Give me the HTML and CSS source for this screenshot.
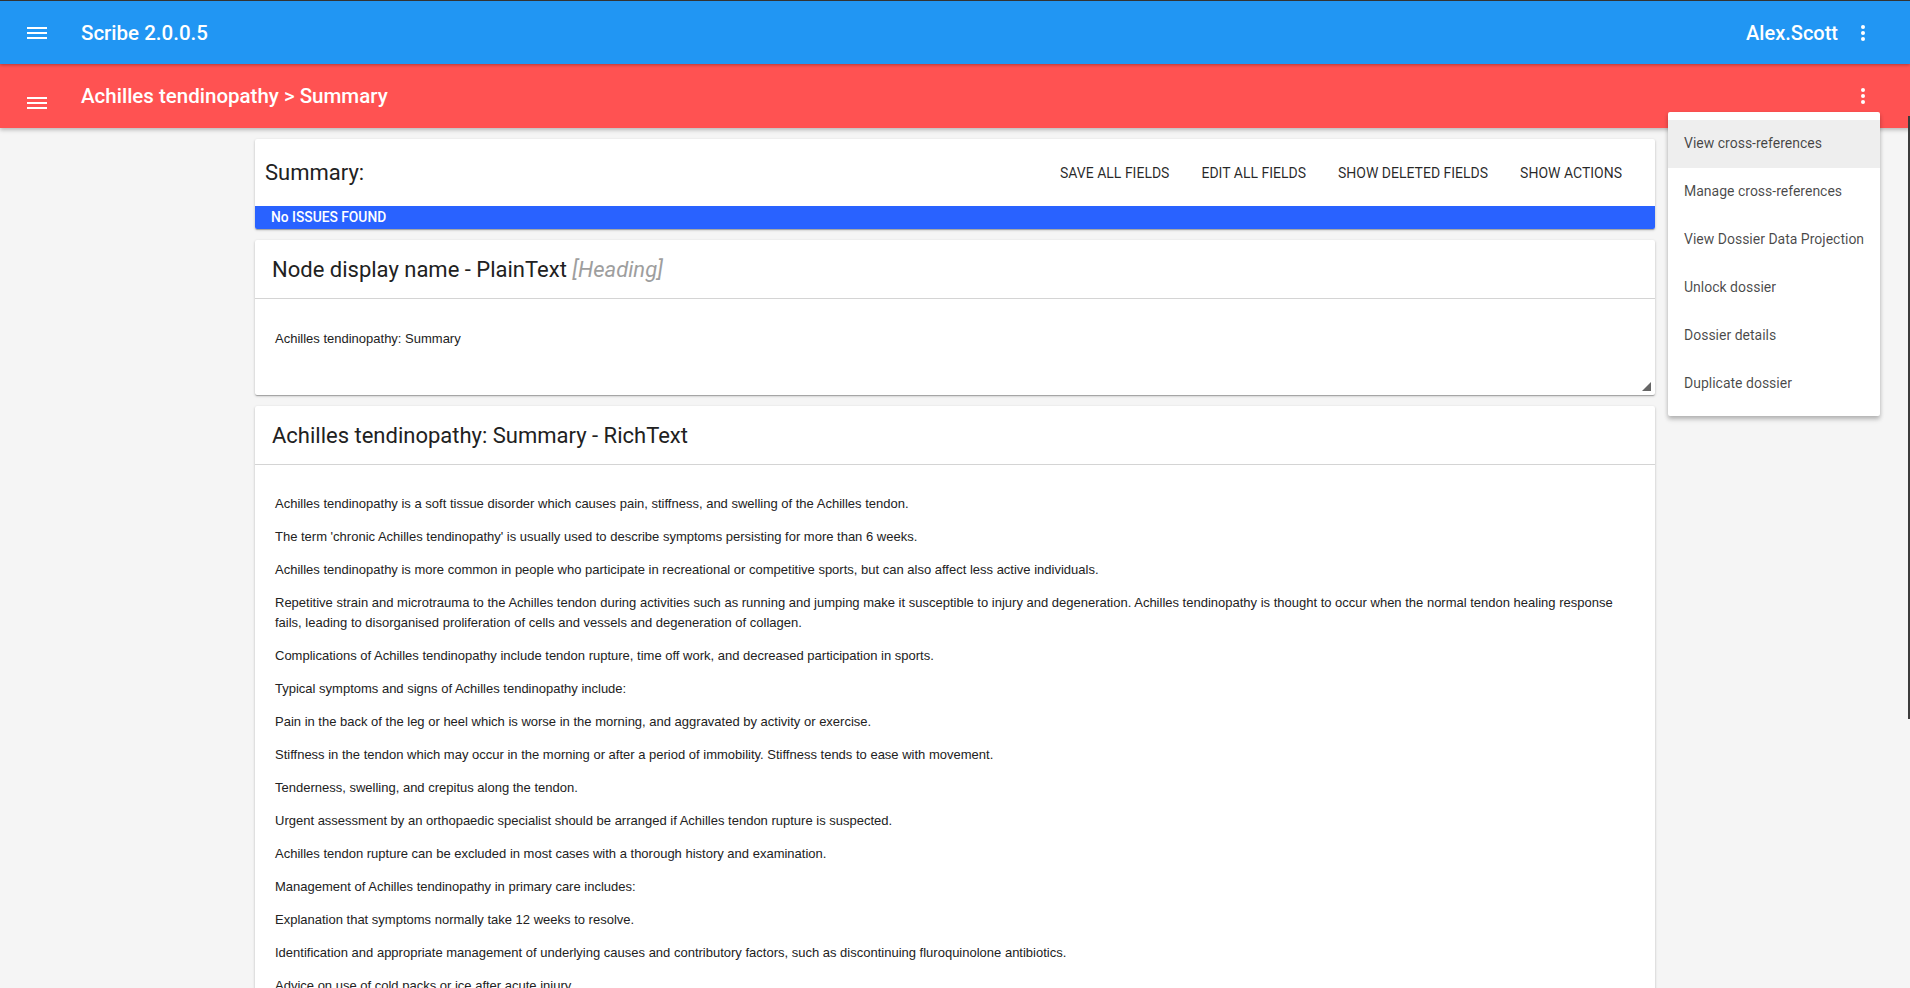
FILE: index.html
```html
<!DOCTYPE html>
<html lang="en">
<head>
<meta charset="utf-8">
<title>Scribe 2.0.0.5</title>
<link rel="stylesheet" href="styles.css">
</head>
<body>
<header class="appbar">
  <button class="icon-btn menu-btn" aria-label="Menu">
    <svg width="20" height="12" viewBox="0 0 20 12"><rect x="0" y="0" width="20" height="2" fill="#fff"/><rect x="0" y="5" width="20" height="2" fill="#fff"/><rect x="0" y="10" width="20" height="2" fill="#fff"/></svg>
  </button>
  <div class="app-title">Scribe 2.0.0.5</div>
  <div class="user">Alex.Scott</div>
  <button class="icon-btn kebab" aria-label="More">
    <svg width="24" height="24" viewBox="0 0 24 24"><circle cx="12" cy="6" r="2" fill="#fff"/><circle cx="12" cy="12" r="2" fill="#fff"/><circle cx="12" cy="18" r="2" fill="#fff"/></svg>
  </button>
</header>
<nav class="subbar">
  <button class="icon-btn menu-btn sub-menu-btn" aria-label="Menu">
    <svg width="20" height="12" viewBox="0 0 20 12"><rect x="0" y="0" width="20" height="2" fill="#fff"/><rect x="0" y="5" width="20" height="2" fill="#fff"/><rect x="0" y="10" width="20" height="2" fill="#fff"/></svg>
  </button>
  <div class="app-title">Achilles tendinopathy &gt; Summary</div>
  <div class="spacer"></div>
  <button class="icon-btn kebab" aria-label="More">
    <svg width="24" height="24" viewBox="0 0 24 24"><circle cx="12" cy="6" r="2" fill="#fff"/><circle cx="12" cy="12" r="2" fill="#fff"/><circle cx="12" cy="18" r="2" fill="#fff"/></svg>
  </button>
</nav>

<main class="content">
  <section class="card summary-card">
    <div class="summary-head">
      <h1 class="summary-title">Summary:</h1>
      <div class="actions">
        <button class="text-btn">Save all fields</button>
        <button class="text-btn">Edit all fields</button>
        <button class="text-btn">Show deleted fields</button>
        <button class="text-btn">Show actions</button>
      </div>
    </div>
    <div class="status">No ISSUES FOUND</div>
  </section>

  <section class="card field-card">
    <div class="field-head">Node display name - PlainText <span class="tag">[Heading]</span></div>
    <div class="field-body plain">
      <p>Achilles tendinopathy: Summary</p>
      <span class="resize-handle"></span>
    </div>
  </section>

  <section class="card field-card">
    <div class="field-head">Achilles tendinopathy: Summary - RichText</div>
    <div class="field-body rich">
      <p>Achilles tendinopathy is a soft tissue disorder which causes pain, stiffness, and swelling of the Achilles tendon.</p>
      <p>The term 'chronic Achilles tendinopathy' is usually used to describe symptoms persisting for more than 6 weeks.</p>
      <p>Achilles tendinopathy is more common in people who participate in recreational or competitive sports, but can also affect less active individuals.</p>
      <p>Repetitive strain and microtrauma to the Achilles tendon during activities such as running and jumping make it susceptible to injury and degeneration. Achilles tendinopathy is thought to occur when the normal tendon healing response fails, leading to disorganised proliferation of cells and vessels and degeneration of collagen.</p>
      <p>Complications of Achilles tendinopathy include tendon rupture, time off work, and decreased participation in sports.</p>
      <p>Typical symptoms and signs of Achilles tendinopathy include:</p>
      <p>Pain in the back of the leg or heel which is worse in the morning, and aggravated by activity or exercise.</p>
      <p>Stiffness in the tendon which may occur in the morning or after a period of immobility. Stiffness tends to ease with movement.</p>
      <p>Tenderness, swelling, and crepitus along the tendon.</p>
      <p>Urgent assessment by an orthopaedic specialist should be arranged if Achilles tendon rupture is suspected.</p>
      <p>Achilles tendon rupture can be excluded in most cases with a thorough history and examination.</p>
      <p>Management of Achilles tendinopathy in primary care includes:</p>
      <p>Explanation that symptoms normally take 12 weeks to resolve.</p>
      <p>Identification and appropriate management of underlying causes and contributory factors, such as discontinuing fluroquinolone antibiotics.</p>
      <p>Advice on use of cold packs or ice after acute injury.</p>
      <p>Advice on activity modification, and a graded return to exercise.</p>
    </div>
  </section>
</main>

<div class="dropdown">
  <div class="dd-item active">View cross-references</div>
  <div class="dd-item">Manage cross-references</div>
  <div class="dd-item">View Dossier Data Projection</div>
  <div class="dd-item">Unlock dossier</div>
  <div class="dd-item">Dossier details</div>
  <div class="dd-item">Duplicate dossier</div>
</div>

<div class="scroll-thumb"></div>
</body>
</html>
```

FILE: styles.css
```css
html, body {
  margin: 0;
  padding: 0;
  height: 100%;
  overflow: hidden;
}

body {
  background: #f5f5f5;
  font-family: Roboto, "Noto Sans", "Liberation Sans", sans-serif;
  color: #212121;
}

button {
  font-family: inherit;
  background: none;
  border: 0;
  padding: 0;
  margin: 0;
  cursor: pointer;
}

.appbar,
.subbar {
  height: 64px;
  box-sizing: border-box;
  display: flex;
  align-items: center;
  color: #fff;
  position: relative;
}

.appbar {
  background: #2196f3;
  border-top: 1px solid #333;
  z-index: 3;
  box-shadow: 0 1px 3px rgba(0, 0, 0, 0.3);
}

.subbar {
  background: #ff5252;
  z-index: 2;
  box-shadow: 0 2px 4px rgba(0, 0, 0, 0.25);
}

.icon-btn {
  display: flex;
  align-items: center;
  justify-content: center;
}

.menu-btn {
  margin-left: 27px;
  width: 20px;
  height: 24px;
}

.sub-menu-btn {
  margin-top: 14px;
}

.app-title {
  margin-left: 34px;
  font-size: 20.5px;
  font-weight: 500;
}

.user {
  margin-left: auto;
  font-size: 20px;
  font-weight: 500;
}

.spacer {
  flex: 1;
}

.kebab {
  width: 24px;
  height: 24px;
  margin-left: 13px;
  margin-right: 35px;
}

.subbar .kebab {
  margin-top: -1px;
}

.content {
  width: 1400px;
  margin: 0 auto;
  padding-top: 11px;
  display: flex;
  flex-direction: column;
  gap: 11px;
}

.card {
  background: #fff;
  border-radius: 2px;
  box-shadow: 0 1px 3px rgba(0, 0, 0, 0.2), 0 1px 1px rgba(0, 0, 0, 0.14), 0 2px 1px -1px rgba(0, 0, 0, 0.12);
  overflow: hidden;
}

.summary-head {
  height: 67px;
  display: flex;
  align-items: center;
  padding: 0 17px 0 10px;
}

.summary-title {
  flex: 1;
  margin: 0;
  font-size: 22px;
  font-weight: 400;
  color: #212121;
}

.actions {
  display: flex;
}

.text-btn {
  height: 36px;
  padding: 0 16px;
  font-size: 14px;
  font-weight: 400;
  text-transform: uppercase;
  color: rgba(0, 0, 0, 0.85);
  letter-spacing: 0;
}

.status {
  height: 23px;
  line-height: 23px;
  background: #2962ff;
  color: #fff;
  font-size: 13.8px;
  font-weight: 500;
  padding-left: 16px;
}

.field-head {
  height: 58px;
  display: flex;
  align-items: center;
  padding: 0 17px;
  font-size: 22px;
  font-weight: 400;
  color: #212121;
  border-bottom: 1px solid #d4d4d4;
  white-space: pre;
}

.tag {
  font-style: italic;
  color: #9e9e9e;
}

.field-body {
  font-family: "Liberation Sans", Arial, sans-serif;
  font-size: 13px;
  line-height: 20px;
  color: #222;
  padding: 29px 20px 28px;
}

.field-body p {
  margin: 0 0 13px;
}

.plain {
  position: relative;
  padding-top: 30px;
  padding-bottom: 46px;
}

.plain p {
  margin: 0;
}

.resize-handle {
  position: absolute;
  right: 4px;
  bottom: 4px;
  width: 0;
  height: 0;
  border-left: 9px solid transparent;
  border-bottom: 9px solid #666;
}

.dropdown {
  position: absolute;
  top: 112px;
  left: 1668px;
  width: 212px;
  padding: 8px 0;
  background: #fff;
  border-radius: 2px;
  box-shadow: 0 2px 4px rgba(0, 0, 0, 0.2), 0 4px 5px rgba(0, 0, 0, 0.12);
  z-index: 5;
}

.dd-item {
  height: 48px;
  line-height: 47px;
  padding: 0 16px;
  font-size: 14px;
  color: rgba(0, 0, 0, 0.72);
  white-space: nowrap;
}

.dd-item.active {
  background: #eeeeee;
}

.scroll-thumb {
  position: fixed;
  right: 0;
  top: 116px;
  width: 2px;
  height: 603px;
  background: #3c3c3c;
  z-index: 6;
}
```
